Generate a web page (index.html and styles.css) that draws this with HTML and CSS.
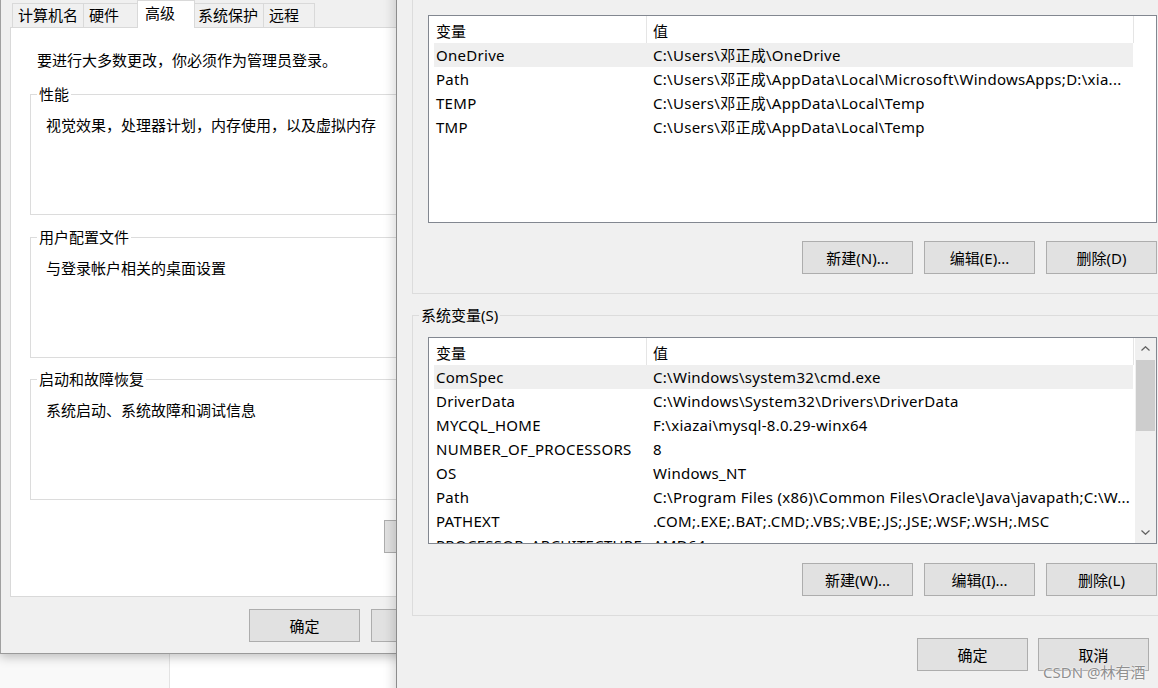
FILE: index.html
```html
<!DOCTYPE html>
<html lang="zh-CN">
<head>
    <meta charset="UTF-8">
    <title>系统属性 - 环境变量</title>
    <link rel="stylesheet" href="styles.css">
</head>
<body>

    <div class="desk-side"></div>
    <div class="desk-main"></div>

    <!-- 系统属性 -->
    <div class="window sysprops">
        <div class="tabs">
            <div class="tab">计算机名</div>
            <div class="tab">硬件</div>
            <div class="tab active">高级</div>
            <div class="tab">系统保护</div>
            <div class="tab">远程</div>
        </div>
        <div class="tab-panel">
            <p class="intro">要进行大多数更改，你必须作为管理员登录。</p>
            <fieldset class="group first">
                <legend>性能</legend>
                <div class="group-body">视觉效果，处理器计划，内存使用，以及虚拟内存</div>
            </fieldset>
            <fieldset class="group second">
                <legend>用户配置文件</legend>
                <div class="group-body">与登录帐户相关的桌面设置</div>
            </fieldset>
            <fieldset class="group third">
                <legend>启动和故障恢复</legend>
                <div class="group-body">系统启动、系统故障和调试信息</div>
            </fieldset>
            <div class="panel-actions">
                <button class="btn btn-wide">环境变量(N)...</button>
            </div>
        </div>
        <div class="dialog-actions">
            <button class="btn">确定</button>
            <button class="btn">取消</button>
            <button class="btn">应用(A)</button>
        </div>
    </div>

    <!-- 环境变量 -->
    <div class="window envvars">
        <fieldset class="var-group user">
            <legend>邓正成 的用户变量(U)</legend>
            <div class="listview user-list">
                <div class="lv-body">
                    <div class="lv-header"><span class="col-name">变量</span><span class="col-value">值</span></div>
                    <div class="lv-row selected"><span class="col-name">OneDrive</span><span class="col-value">C:\Users\邓正成\OneDrive</span></div>
                    <div class="lv-row"><span class="col-name">Path</span><span class="col-value">C:\Users\邓正成\AppData\Local\Microsoft\WindowsApps;D:\xia...</span></div>
                    <div class="lv-row"><span class="col-name">TEMP</span><span class="col-value">C:\Users\邓正成\AppData\Local\Temp</span></div>
                    <div class="lv-row"><span class="col-name">TMP</span><span class="col-value">C:\Users\邓正成\AppData\Local\Temp</span></div>
                </div>
            </div>
            <div class="group-actions">
                <button class="btn">新建(N)...</button>
                <button class="btn">编辑(E)...</button>
                <button class="btn">删除(D)</button>
            </div>
        </fieldset>

        <fieldset class="var-group system">
            <legend>系统变量(S)</legend>
            <div class="listview system-list">
                <div class="lv-body">
                    <div class="lv-header"><span class="col-name">变量</span><span class="col-value">值</span></div>
                    <div class="lv-row selected"><span class="col-name">ComSpec</span><span class="col-value">C:\Windows\system32\cmd.exe</span></div>
                    <div class="lv-row"><span class="col-name">DriverData</span><span class="col-value">C:\Windows\System32\Drivers\DriverData</span></div>
                    <div class="lv-row"><span class="col-name">MYCQL_HOME</span><span class="col-value">F:\xiazai\mysql-8.0.29-winx64</span></div>
                    <div class="lv-row"><span class="col-name">NUMBER_OF_PROCESSORS</span><span class="col-value">8</span></div>
                    <div class="lv-row"><span class="col-name">OS</span><span class="col-value">Windows_NT</span></div>
                    <div class="lv-row"><span class="col-name">Path</span><span class="col-value">C:\Program Files (x86)\Common Files\Oracle\Java\javapath;C:\W...</span></div>
                    <div class="lv-row"><span class="col-name">PATHEXT</span><span class="col-value">.COM;.EXE;.BAT;.CMD;.VBS;.VBE;.JS;.JSE;.WSF;.WSH;.MSC</span></div>
                    <div class="lv-row"><span class="col-name">PROCESSOR_ARCHITECTURE</span><span class="col-value">AMD64</span></div>
                </div>
                <div class="scrollbar">
                    <div class="sb-arrow">
                        <svg width="9" height="5" viewBox="0 0 9 5"><polyline points="0.5,4.5 4.5,0.7 8.5,4.5" fill="none" stroke="#606060" stroke-width="1.2"/></svg>
                    </div>
                    <div class="sb-track"><div class="sb-thumb"></div></div>
                    <div class="sb-arrow">
                        <svg width="9" height="5" viewBox="0 0 9 5"><polyline points="0.5,0.5 4.5,4.3 8.5,0.5" fill="none" stroke="#606060" stroke-width="1.2"/></svg>
                    </div>
                </div>
            </div>
            <div class="group-actions">
                <button class="btn">新建(W)...</button>
                <button class="btn">编辑(I)...</button>
                <button class="btn">删除(L)</button>
            </div>
        </fieldset>

        <div class="dialog-actions">
            <button class="btn">确定</button>
            <button class="btn">取消</button>
        </div>
    </div>

    <div class="watermark">CSDN @林有酒</div>

</body>
</html>
```

FILE: styles.css
```css
body {
    margin: 0;
    width: 1158px;
    height: 688px;
    overflow: hidden;
    position: relative;
    display: flex;
    font-family: "Noto Sans", "Noto Sans CJK SC", sans-serif;
    font-size: 15px;
    line-height: 20px;
    color: #000;
    background: #fff;
}
.desk-side {
    width: 169px;
    background: #f9f9f9;
    border-right: 1px solid #e3e3e3;
}
.desk-main {
    flex: 1;
    background: #fff;
}

.window {
    position: absolute;
    box-sizing: border-box;
    background: #f0f0f0;
}
.btn {
    font: inherit;
    color: #000;
    width: 111px;
    height: 33px;
    padding: 0;
    background: #e1e1e1;
    border: 1px solid #adadad;
}
.btn-wide {
    width: 200px;
}
.dialog-actions {
    display: flex;
    justify-content: flex-end;
}

/* 系统属性 */
.sysprops {
    left: 0;
    top: 0;
    width: 614px;
    padding-top: 3px;
    border-left: 1px solid #a0a0a0;
    border-right: 1px solid #a0a0a0;
    border-bottom: 1px solid #9a9a9a;
    box-shadow: 0 3px 10px rgba(0,0,0,0.25);
}
.tabs {
    display: flex;
    padding-left: 11px;
    height: 24px;
}
.tab {
    box-sizing: border-box;
    height: 24px;
    min-width: 55px;
    padding: 0 5px;
    margin-left: -1px;
    line-height: 23px;
    border: 1px solid #d9d9d9;
    border-bottom: none;
    background: #f0f0f0;
}
.tab:first-child {
    margin-left: 0;
}
.tab:last-child {
    min-width: 52px;
}
.tab.active {
    position: relative;
    z-index: 1;
    height: 28px;
    min-width: 58px;
    margin: -3px -2px -1px -1px;
    padding-left: 7px;
    line-height: 24px;
    background: #fff;
}
.tab-panel {
    margin: 0 9px;
    padding: 22px 19px 43px;
    background: #fff;
    border: 1px solid #d9d9d9;
}
.intro {
    margin: 0 0 0 7px;
}
.group {
    margin: 0;
    min-width: 0;
    padding: 0 0 0 6px;
    border: 1px solid #dcdcdc;
}
.group legend {
    padding: 0 2px;
}
.group.first {
    margin-top: 14px;
}
.group.second {
    margin-top: 12px;
}
.group.third {
    margin-top: 11px;
}
.group-body {
    box-sizing: border-box;
    height: 110px;
    padding: 11px 0 0 9px;
}
.panel-actions {
    display: flex;
    justify-content: flex-end;
    margin-top: 20px;
}
.sysprops .dialog-actions {
    gap: 11px;
    padding: 12px 9px 11px;
}

/* 环境变量 */
.envvars {
    left: 396px;
    top: -20px;
    width: 792px;
    height: 720px;
    border-left: 1px solid #8c8c8c;
    box-shadow: -3px 0 10px rgba(0,0,0,0.15);
}
.var-group {
    margin: 0 15px;
    min-width: 0;
    padding: 12px 15px 19px;
    border: 1px solid #dcdcdc;
}
.var-group.user {
    padding-top: 15px;
}
.var-group legend {
    padding: 0 2px;
    margin-left: -9px;
}
.var-group.system {
    margin-top: 11px;
}
.listview {
    display: flex;
    box-sizing: border-box;
    height: 208px;
    background: #fff;
    border: 1px solid #828790;
    overflow: hidden;
}
.system-list {
    height: 207px;
}
.lv-body {
    flex: 1;
    overflow: hidden;
}
.lv-header {
    display: flex;
    height: 27px;
}
.lv-header span {
    box-sizing: border-box;
    padding-top: 5px;
    border-right: 1px solid #e5e5e5;
}
.lv-header .col-name {
    width: 218px;
    padding-left: 7px;
}
.lv-header .col-value {
    width: 487px;
    padding-left: 6px;
}
.lv-row {
    display: flex;
    width: 699px;
    height: 24px;
    margin-left: 5px;
    line-height: 24px;
    letter-spacing: 0.28px;
    white-space: nowrap;
}
.lv-row.selected {
    background: #efefef;
}
.lv-row span {
    box-sizing: border-box;
    overflow: hidden;
}
.lv-row .col-name {
    width: 212px;
    flex: none;
    padding-left: 2px;
}
.lv-row .col-value {
    flex: 1;
    padding-left: 7px;
}
.scrollbar {
    width: 21px;
    display: flex;
    flex-direction: column;
    background: #f0f0f0;
}
.sb-arrow {
    height: 21px;
    display: flex;
    align-items: center;
    justify-content: center;
}
.sb-track {
    flex: 1;
}
.sb-thumb {
    height: 71px;
    margin: 1px 1px 0;
    background: #cdcdcd;
}
.group-actions {
    display: flex;
    justify-content: flex-end;
    gap: 11px;
    margin-top: 18px;
}
.system .group-actions {
    margin-top: 19px;
}
.envvars .dialog-actions {
    gap: 10px;
    margin-top: 22px;
    padding-right: 39px;
}

.watermark {
    position: absolute;
    left: 1043px;
    top: 662px;
    font-size: 15px;
    color: #8f8f8f;
    text-shadow: 0 0 2px #fff, 0 0 1px #fff;
    white-space: nowrap;
}
```
